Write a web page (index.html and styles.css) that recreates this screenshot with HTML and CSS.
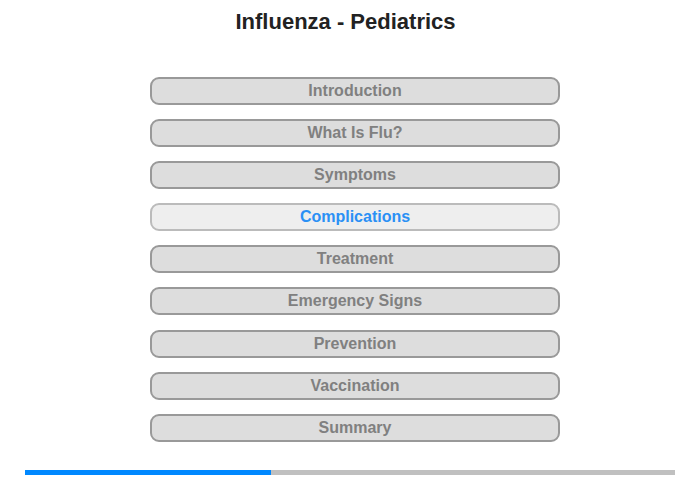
FILE: index.html
```html
<!DOCTYPE html>
<html>
<head>
<meta charset="utf-8">
<link rel="stylesheet" href="styles.css">
</head>
<body>
<div class="page">
  <h1 class="title">Influenza - Pediatrics</h1>
  <nav class="menu">
    <div class="item">Introduction</div>
    <div class="item">What Is Flu?</div>
    <div class="item">Symptoms</div>
    <div class="item active">Complications</div>
    <div class="item">Treatment</div>
    <div class="item">Emergency Signs</div>
    <div class="item">Prevention</div>
    <div class="item">Vaccination</div>
    <div class="item">Summary</div>
  </nav>
  <div class="progress"><div class="bar" style="width:37.85%"></div></div>
</div>
</body>
</html>
```
FILE: styles.css
```css
html, body { margin: 0; padding: 0; background: #fff; }
body { font-family: "Liberation Sans", Arial, sans-serif; }
.page { width: 700px; height: 480px; position: relative; }
.title {
  margin: 0;
  padding: 10px 9px 0 0;
  height: 24px;
  line-height: 24px;
  font-size: 22px;
  font-weight: bold;
  color: #222;
  text-align: center;
}
.menu {
  margin: 43px 0 0 150px;
  width: 410px;
  display: flex;
  flex-direction: column;
  gap: 14.1px;
}
.item {
  box-sizing: border-box;
  height: 28px;
  border: 2px solid #999;
  border-radius: 9px;
  background: #ddd;
  color: #808080;
  font-size: 16px;
  font-weight: bold;
  line-height: 24px;
  text-align: center;
}
.item.active {
  background: #eee;
  border-color: #bbb;
  color: #2a90f5;
}
.progress {
  position: absolute;
  left: 25px;
  top: 470px;
  width: 650px;
  height: 5px;
  background: #c0c0c0;
}
.bar { height: 100%; background: #0088ff; }
```
